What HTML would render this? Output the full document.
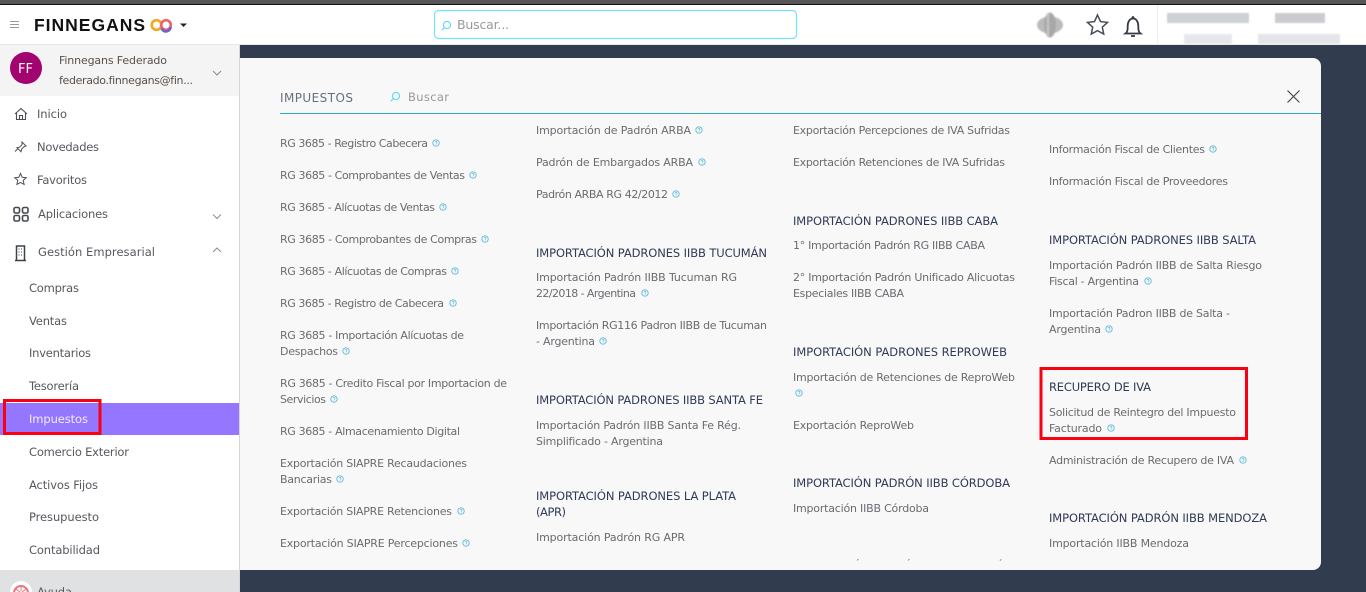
<!DOCTYPE html>
<html lang="es"><head><meta charset="utf-8"><title>Finnegans</title>
<style>
html,body{margin:0;padding:0;width:1366px;height:592px;overflow:hidden;background:#323c4f}
svg{display:block}
text{font-family:"DejaVu Sans","Liberation Sans",sans-serif;font-size:11px;fill:#686c70}
.h{fill:#2f3a55;font-size:11.5px}
.s{fill:#55585e;font-size:11.5px}
.u{fill:#5a5048;font-size:11px}
</style></head><body>
<svg width="1366" height="592" viewBox="0 0 1366 592" xmlns="http://www.w3.org/2000/svg">
<defs>
<symbol id="q" viewBox="0 0 8 8"><circle cx="4" cy="4" r="3.2" fill="none" stroke="#5bbbd8" stroke-width=".9"/><path d="M3 3.200a1 1 0 1 1 1.400 1L4 4.700M4 5.500v.6" fill="none" stroke="#5bbbd8" stroke-width=".7"/></symbol>
<filter id="b"><feGaussianBlur stdDeviation=".7"/></filter>
<clipPath id="pc"><rect x="240" y="114" width="1081" height="447"/></clipPath>
</defs>
<rect width="1366" height="592" fill="#323c4f"/>
<!-- top bar -->
<rect width="1366" height="44" fill="#fff"/>
<rect width="1366" height="4" fill="#565656"/><rect y="4" width="1366" height="1" fill="#111"/>
<rect y="44" width="1366" height="1" fill="#e8e8e8"/>
<path d="M10 21.500h9M10 24.500h9M10 27.500h9" stroke="#999" stroke-width="1"/>
<text x="34" y="31" textLength="111" lengthAdjust="spacing" style="font-family:'Liberation Sans',sans-serif;font-size:17.500px;font-weight:700;fill:#111">FINNEGANS</text>
<circle cx="156.500" cy="25" r="4.800" fill="none" stroke="#f7a818" stroke-width="2.600"/>
<circle cx="166" cy="25" r="4.800" fill="none" stroke="#e8646e" stroke-width="2.600"/>
<path d="M161.500 28.500a4.800 4.800 0 0 0 9.200-1.500" fill="none" stroke="#6d63c9" stroke-width="2.600"/>
<path d="M180 23.500h7l-3.500 3.500z" fill="#1c2433"/>
<rect x="434.500" y="10.500" width="362" height="28" rx="4" fill="#fff" stroke="#74e2fd" stroke-width="1.200"/>
<circle cx="447" cy="25" r="3.600" fill="none" stroke="#5fd8f5" stroke-width="1.100"/><path d="M444.400 27.600l-2.600 2.600" stroke="#5fd8f5" stroke-width="1.100"/>
<text x="457" y="29" textLength="52" style="font-size:12.500px;fill:#98999c">Buscar...</text>
<g filter="url(#b)"><ellipse cx="1050" cy="25" rx="13" ry="8.500" fill="#bbb"/><ellipse cx="1050" cy="25" rx="6" ry="12.500" fill="#a8a8a8"/><rect x="1047" y="13" width="2" height="24" fill="#c8c8c8"/></g>
<path d="M1097.500 15l3 6.600 7 .8-5.200 4.700 1.400 7-6.200-3.500-6.200 3.500 1.400-7-5.200-4.700 7-.8z" fill="none" stroke="#444b55" stroke-width="1.500"/>
<path d="M1125.500 33.500c2-1.500 2.200-3.500 2.200-7.500 0-4 2-7.500 5.300-7.500s5.300 3.500 5.300 7.500c0 4 .2 6 2.200 7.500z" fill="none" stroke="#333a44" stroke-width="1.800"/>
<circle cx="1133" cy="17.500" r="1.400" fill="#333a44"/><path d="M1131 36h4" stroke="#333a44" stroke-width="1.800"/>
<path d="M1157.500 5v39" stroke="#eeeeee"/>
<g filter="url(#b)"><rect x="1167" y="13" width="82" height="10" fill="#ced1d6"/><rect x="1275" y="13" width="50" height="10" fill="#cbccd0"/><rect x="1184" y="34" width="48" height="10" fill="#e6e7ea"/><rect x="1258" y="34" width="82" height="10" fill="#e4e5e8"/></g>
<!-- sidebar -->
<rect y="45" width="239" height="547" fill="#fff"/>
<rect x="239" y="45" width="1" height="547" fill="#d6d6d6"/>
<rect y="45" width="239" height="51" fill="#f4f4f4"/>
<circle cx="26" cy="68" r="16" fill="#a2036f"/>
<text x="18" y="73" textLength="15" style="font-size:13px;fill:#fff">FF</text>
<text class="u" x="59" y="64" textLength="108">Finnegans Federado</text>
<text class="u" x="59" y="84" textLength="134">federado.finnegans@fin...</text>
<path d="M213 71l4 4 4-4" fill="none" stroke="#8d8d8d" stroke-width="1.100"/>
<path d="M15 114l6-5.500 6 5.500M16.500 113v6.500h9V113M19.500 119.500v-4h3v4" fill="none" stroke="#4b4f56" stroke-width="1.100"/>
<text class="s" x="37" y="118" textLength="30">Inicio</text>
<path d="M22 142l4 4-2 .7-2.500 2.500-.5 2.500-4-4 2.500-.5 2.500-2.500zM18 148.500l-3 3" fill="none" stroke="#4b4f56" stroke-width="1"/>
<text class="s" x="37" y="151" textLength="62">Novedades</text>
<path d="M20.500 173.500l1.700 3.800 4 .4-3 2.700.9 4-3.600-2-3.600 2 .9-4-3-2.700 4-.4z" fill="none" stroke="#4b4f56" stroke-width="1"/>
<text class="s" x="37" y="184" textLength="50">Favoritos</text>
<g fill="none" stroke="#454a52" stroke-width="1.600"><rect x="14" y="207.500" width="5.500" height="5.500" rx="1.500"/><rect x="22.500" y="207.500" width="5.500" height="5.500" rx="1.500"/><rect x="14" y="215.500" width="5.500" height="5.500" rx="1.500"/><rect x="22.500" y="215.500" width="5.500" height="5.500" rx="1.500"/></g>
<text class="s" x="38" y="218" textLength="70">Aplicaciones</text>
<path d="M213 214.500l4 4 4-4" fill="none" stroke="#8d8d8d" stroke-width="1"/>
<path d="M16.500 260v-14h8v14M15 260.500h11" fill="none" stroke="#3d424a" stroke-width="1.500"/>
<path d="M18.500 249h1M21 249h1M18.500 252h1M21 252h1M18.500 255h1M21 255h1" stroke="#3d424a"/>
<text class="s" x="38" y="256" textLength="117">Gestión Empresarial</text>
<path d="M213 252l4-4 4 4" fill="none" stroke="#8d8d8d" stroke-width="1"/>
<text class="s" x="29" y="292" textLength="50">Compras</text>
<text class="s" x="29" y="325" textLength="38">Ventas</text>
<text class="s" x="29" y="357" textLength="62">Inventarios</text>
<text class="s" x="29" y="390" textLength="50">Tesorería</text>
<rect y="403" width="239" height="32" fill="#9476ff"/>
<text class="s" x="29" y="423" textLength="59" style="fill:#f0ecff">Impuestos</text>
<rect x="4.500" y="400.500" width="95.500" height="33" fill="none" stroke="#fb0010" stroke-width="3"/>
<text class="s" x="29" y="456" textLength="100">Comercio Exterior</text>
<text class="s" x="29" y="489" textLength="69">Activos Fijos</text>
<text class="s" x="29" y="521" textLength="70">Presupuesto</text>
<text class="s" x="29" y="554" textLength="71">Contabilidad</text>
<rect y="570" width="239" height="22" fill="#e0e1e3"/>
<circle cx="21" cy="592" r="11" fill="#fff"/><circle cx="21" cy="593" r="7" fill="none" stroke="#f0707a" stroke-width="2"/><path d="M21 586v5M16 589l4 3M26 589l-4 3" stroke="#f0707a"/>
<text class="s" x="37" y="596" textLength="35">Ayuda</text>
<!-- panel -->
<path d="M240 58H1313a8 8 0 0 1 8 8V562a8 8 0 0 1-8 8H240z" fill="#f8f8f8"/>
<text x="280" y="102" textLength="73" style="font-size:12px;fill:#66707c">IMPUESTOS</text>
<circle cx="396" cy="96" r="3.600" fill="none" stroke="#5fd8f5" stroke-width="1.100"/><path d="M393.400 98.600l-2.800 2.800" stroke="#5fd8f5" stroke-width="1.100"/>
<text x="408" y="101" textLength="41" style="font-size:11.500px;fill:#98999c">Buscar</text>
<path d="M1287.500 90.500l12 12M1299.500 90.500l-12 12" stroke="#454a55" stroke-width="1.200"/>
<rect x="280" y="113" width="1041" height="1" fill="#2fa8cb"/>
<g clip-path="url(#pc)">
<text x="280" y="147" textLength="148">RG 3685 - Registro Cabecera</text><use href="#q" x="432" y="139" width="8" height="8"/>
<text x="280" y="179" textLength="185">RG 3685 - Comprobantes de Ventas</text><use href="#q" x="469" y="171" width="8" height="8"/>
<text x="280" y="211" textLength="155">RG 3685 - Alícuotas de Ventas</text><use href="#q" x="439" y="203" width="8" height="8"/>
<text x="280" y="243" textLength="197">RG 3685 - Comprobantes de Compras</text><use href="#q" x="481" y="235" width="8" height="8"/>
<text x="280" y="275" textLength="167">RG 3685 - Alícuotas de Compras</text><use href="#q" x="451" y="267" width="8" height="8"/>
<text x="280" y="307" textLength="164">RG 3685 - Registro de Cabecera</text><use href="#q" x="449" y="299" width="8" height="8"/>
<text x="280" y="339" textLength="184">RG 3685 - Importación Alícuotas de</text>
<text x="280" y="355" textLength="58">Despachos</text><use href="#q" x="342" y="347" width="8" height="8"/>
<text x="280" y="387" textLength="227">RG 3685 - Credito Fiscal por Importacion de</text>
<text x="280" y="403" textLength="46">Servicios</text><use href="#q" x="330" y="395" width="8" height="8"/>
<text x="280" y="435" textLength="180">RG 3685 - Almacenamiento Digital</text>
<text x="280" y="467" textLength="187">Exportación SIAPRE Recaudaciones</text>
<text x="280" y="483" textLength="52">Bancarias</text><use href="#q" x="336" y="475" width="8" height="8"/>
<text x="280" y="515" textLength="172">Exportación SIAPRE Retenciones</text><use href="#q" x="457" y="507" width="8" height="8"/>
<text x="280" y="547" textLength="178">Exportación SIAPRE Percepciones</text><use href="#q" x="462" y="539" width="8" height="8"/>

<text x="536" y="134" textLength="155">Importación de Padrón ARBA</text><use href="#q" x="695" y="126" width="8" height="8"/>
<text x="536" y="166" textLength="157">Padrón de Embargados ARBA</text><use href="#q" x="698" y="158" width="8" height="8"/>
<text x="536" y="198" textLength="132">Padrón ARBA RG 42/2012</text><use href="#q" x="672" y="190" width="8" height="8"/>
<text class="h" x="536" y="257" textLength="231">IMPORTACIÓN PADRONES IIBB TUCUMÁN</text>
<text x="536" y="281" textLength="201">Importación Padrón IIBB Tucuman RG</text>
<text x="536" y="297" textLength="100">22/2018 - Argentina</text><use href="#q" x="641" y="289" width="8" height="8"/>
<text x="536" y="329" textLength="231">Importación RG116 Padron IIBB de Tucuman</text>
<text x="536" y="345" textLength="59">- Argentina</text><use href="#q" x="599" y="337" width="8" height="8"/>
<text class="h" x="536" y="404" textLength="227">IMPORTACIÓN PADRONES IIBB SANTA FE</text>
<text x="536" y="429" textLength="205">Importación Padrón IIBB Santa Fe Rég.</text>
<text x="536" y="445" textLength="127">Simplificado - Argentina</text>
<text class="h" x="536" y="500" textLength="200">IMPORTACIÓN PADRONES LA PLATA</text>
<text class="h" x="536" y="516" textLength="30">(APR)</text>
<text x="536" y="541" textLength="149">Importación Padrón RG APR</text>

<text x="793" y="134" textLength="217">Exportación Percepciones de IVA Sufridas</text>
<text x="793" y="166" textLength="212">Exportación Retenciones de IVA Sufridas</text>
<text class="h" x="793" y="225" textLength="205">IMPORTACIÓN PADRONES IIBB CABA</text>
<text x="793" y="249" textLength="192">1° Importación Padrón RG IIBB CABA</text>
<text x="793" y="281" textLength="222">2° Importación Padrón Unificado Alicuotas</text>
<text x="793" y="297" textLength="111">Especiales IIBB CABA</text>
<text class="h" x="793" y="356" textLength="214">IMPORTACIÓN PADRONES REPROWEB</text>
<text x="793" y="381" textLength="222">Importación de Retenciones de ReproWeb</text><use href="#q" x="795" y="389" width="8" height="8"/>
<text x="793" y="429" textLength="121">Exportación ReproWeb</text>
<text class="h" x="793" y="487" textLength="217">IMPORTACIÓN PADRÓN IIBB CÓRDOBA</text>
<text x="793" y="512" textLength="136">Importación IIBB Córdoba</text>
<text class="h" x="793" y="570" textLength="225" opacity=".7">IMPORTACIÓN PADRÓN IIBB ENTRE RÍOS</text>

<text x="1049" y="153" textLength="156">Información Fiscal de Clientes</text><use href="#q" x="1209" y="145" width="8" height="8"/>
<text x="1049" y="185" textLength="179">Información Fiscal de Proveedores</text>
<text class="h" x="1049" y="244" textLength="207">IMPORTACIÓN PADRONES IIBB SALTA</text>
<text x="1049" y="269" textLength="213">Importación Padrón IIBB de Salta Riesgo</text>
<text x="1049" y="285" textLength="90">Fiscal - Argentina</text><use href="#q" x="1144" y="277" width="8" height="8"/>
<text x="1049" y="317" textLength="181">Importación Padron IIBB de Salta -</text>
<text x="1049" y="333" textLength="52">Argentina</text><use href="#q" x="1105" y="325" width="8" height="8"/>
<text class="h" x="1049" y="391" textLength="102">RECUPERO DE IVA</text>
<text x="1049" y="416" textLength="187">Solicitud de Reintegro del Impuesto</text>
<text x="1049" y="432" textLength="53">Facturado</text><use href="#q" x="1107" y="424" width="8" height="8"/>
<text x="1049" y="464" textLength="185">Administración de Recupero de IVA</text><use href="#q" x="1239" y="456" width="8" height="8"/>
<text class="h" x="1049" y="522" textLength="218">IMPORTACIÓN PADRÓN IIBB MENDOZA</text>
<text x="1049" y="547" textLength="140">Importación IIBB Mendoza</text>
</g>
<rect x="1041" y="368.500" width="205.500" height="70" fill="none" stroke="#fb0010" stroke-width="3"/>
</svg>
</body></html>
